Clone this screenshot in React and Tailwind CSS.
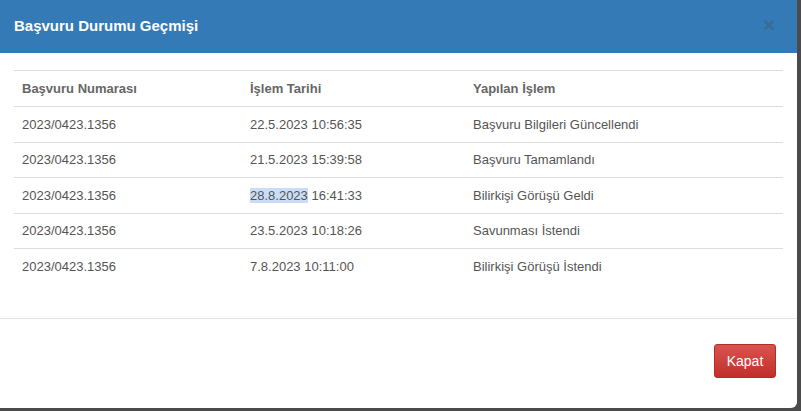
const rows = [
  { no: "2023/0423.1356", date: "22.5.2023", time: "10:56:35", action: "Başvuru Bilgileri Güncellendi" },
  { no: "2023/0423.1356", date: "21.5.2023", time: "15:39:58", action: "Başvuru Tamamlandı" },
  { no: "2023/0423.1356", date: "28.8.2023", time: "16:41:33", action: "Bilirkişi Görüşü Geldi", selected: true },
  { no: "2023/0423.1356", date: "23.5.2023", time: "10:18:26", action: "Savunması İstendi" },
  { no: "2023/0423.1356", date: "7.8.2023", time: "10:11:00", action: "Bilirkişi Görüşü İstendi" },
];

export default function App() {
  return (
    <div
      className="w-[801px] h-[411px] bg-[#4b4b4b] overflow-hidden"
      style={{ fontFamily: '"Liberation Sans", Arial, sans-serif' }}
    >
      <div className="w-[797px] h-[408px] bg-white rounded-br-[6px] flex flex-col">
        {/* header */}
        <div className="h-[53px] bg-[#337ab7] flex items-center justify-between pl-[14px] pr-[22px]">
          <h4 className="text-white font-bold text-[15px]">Başvuru Durumu Geçmişi</h4>
          <span className="text-[#3d6684] opacity-70 text-[20px] font-bold leading-none mb-[4px]">×</span>
        </div>

        {/* body */}
        <div className="px-[14px] pt-[17px] h-[265px]">
          <table className="w-full text-[13px] border-collapse">
            <thead>
              <tr className="border-t border-[#ddd] border-b border-b-[#ddd] h-[36px] text-left">
                <th className="w-[228px] px-[8px] font-bold text-[#666]">Başvuru Numarası</th>
                <th className="w-[223px] px-[8px] font-bold text-[#666]">İşlem Tarihi</th>
                <th className="px-[8px] font-bold text-[#666]">Yapılan İşlem</th>
              </tr>
            </thead>
            <tbody className="text-[#555]">
              {rows.map((r, i) => (
                <tr key={i} className={`h-[35.5px] ${i < rows.length - 1 ? "border-b border-[#ddd]" : ""}`}>
                  <td className="px-[8px]">{r.no}</td>
                  <td className="px-[8px]">
                    {r.selected ? <span className="bg-[#c9def6]">{r.date}</span> : r.date} {r.time}
                  </td>
                  <td className="px-[8px]">{r.action}</td>
                </tr>
              ))}
            </tbody>
          </table>
        </div>

        {/* footer */}
        <div className="border-t border-[#e5e5e5] flex-1 flex justify-end items-start pt-[25px] pr-[21px]">
          <button className="w-[62px] h-[34px] rounded-[3px] border border-[#b52b27] bg-gradient-to-b from-[#d9534f] to-[#c12e2a] text-white text-[14px]">
            Kapat
          </button>
        </div>
      </div>
    </div>
  );
}
